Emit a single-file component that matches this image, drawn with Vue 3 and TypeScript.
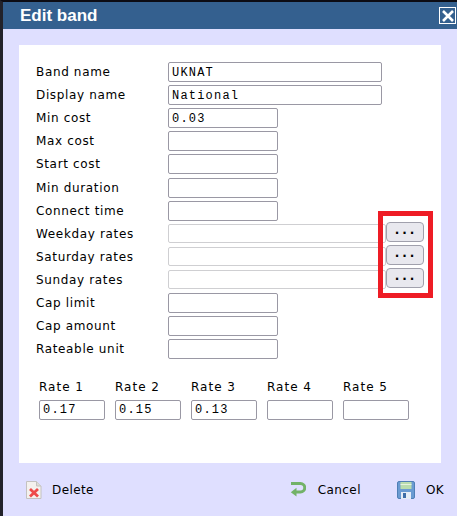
<script setup lang="ts">
interface Row { label: string; value: string; size: 'long' | 'short' | 'rate' }
const rows: Row[] = [
  { label: 'Band name', value: 'UKNAT', size: 'long' },
  { label: 'Display name', value: 'National', size: 'long' },
  { label: 'Min cost', value: '0.03', size: 'short' },
  { label: 'Max cost', value: '', size: 'short' },
  { label: 'Start cost', value: '', size: 'short' },
  { label: 'Min duration', value: '', size: 'short' },
  { label: 'Connect time', value: '', size: 'short' },
  { label: 'Weekday rates', value: '', size: 'rate' },
  { label: 'Saturday rates', value: '', size: 'rate' },
  { label: 'Sunday rates', value: '', size: 'rate' },
  { label: 'Cap limit', value: '', size: 'short' },
  { label: 'Cap amount', value: '', size: 'short' },
  { label: 'Rateable unit', value: '', size: 'short' },
]
const rates = [
  { label: 'Rate 1', value: '0.17' },
  { label: 'Rate 2', value: '0.15' },
  { label: 'Rate 3', value: '0.13' },
  { label: 'Rate 4', value: '' },
  { label: 'Rate 5', value: '' },
]
</script>

<template>
  <div class="dialog">
    <header class="titlebar">
      <span class="title">Edit band</span>
      <span class="close">
        <svg width="14" height="14" viewBox="0 0 14 14"><path d="M2 2 L12 12 M12 2 L2 12" stroke="#fff" stroke-width="2.6" fill="none" /></svg>
      </span>
    </header>
    <main class="card">
      <div class="form">
        <div v-for="r in rows" :key="r.label" class="row">
          <span class="label">{{ r.label }}</span>
          <input class="field" :class="r.size" :value="r.value" :disabled="r.size === 'rate'" readonly />
          <button v-if="r.size === 'rate'" class="dots" type="button">...</button>
        </div>
        <div class="highlight"></div>
      </div>
      <div class="rates">
        <div v-for="r in rates" :key="r.label" class="rate">
          <span class="rate-label">{{ r.label }}</span>
          <input class="field rate-input" :value="r.value" readonly />
        </div>
      </div>
    </main>
    <footer class="footer">
      <span class="action delete">
        <svg width="17" height="18" viewBox="0 0 17 18">
          <path d="M1.5 .5 H11.5 L16 5 V17.5 H1.5 Z" fill="#f4f1ee" stroke="#c4c2c0" />
          <path d="M11.5 .5 V5 H16" fill="#dddbd8" stroke="#c4c2c0" />
          <path d="M5 8 L13 15.5 M13 8 L5 15.5" stroke="#ee4a4a" stroke-width="2.8" fill="none" />
        </svg>
        Delete
      </span>
      <span class="action cancel">
        <svg width="16" height="16" viewBox="0 0 16 16">
          <path d="M1 1.5 H10.5 A4.2 4.2 0 0 1 10.5 10 H4" fill="none" stroke="#72b268" stroke-width="3" />
          <path d="M6.5 5.8 V14.5 L.8 10.2 Z" fill="#72b268" />
        </svg>
        Cancel
      </span>
      <span class="action ok">
        <svg width="18" height="18" viewBox="0 0 18 18">
          <rect x=".5" y=".5" width="17" height="17" rx="1.5" fill="#6a9bd2" stroke="#4f7fb6" />
          <rect x="3.5" y="1" width="11" height="7" fill="#b9dcae" />
          <rect x="3.5" y="3" width="11" height="1" fill="#e6f2df" />
          <rect x="4" y="11" width="10" height="7" fill="#e6edf6" />
          <rect x="6" y="12" width="3" height="5" fill="#3f6fa8" />
        </svg>
        OK
      </span>
    </footer>
  </div>
</template>

<style>
html, body { margin: 0; background: #fff; }
</style>

<style scoped>
.dialog {
  width: 457px;
  height: 516px;
  box-sizing: border-box;
  border-top: 2px solid #0c0c14;
  border-left: 3px solid #22222a;
  background: #dfdfff;
  font-family: "DejaVu Sans", Verdana, sans-serif;
  font-size: 12px;
  color: #000;
  display: flex;
  flex-direction: column;
  overflow: hidden;
}
.titlebar {
  height: 27px;
  flex: none;
  background: #34608f;
  display: flex;
  align-items: center;
  justify-content: space-between;
  padding: 0 1px 0 17px;
}
.title {
  font-family: "Liberation Sans", Arial, sans-serif;
  font-size: 17px;
  font-weight: 700;
  color: #fff;
}
.close {
  width: 15px;
  height: 15px;
  border: 1px solid #fff;
  display: flex;
  align-items: center;
  justify-content: center;
}
.card {
  flex: none;
  box-sizing: border-box;
  width: 422px;
  height: 418px;
  margin: 16px 0 0 16px;
  background: #fff;
  padding: 15.5px 0 0 17px;
}
.form { position: relative; }
.row {
  height: 23.1px;
  display: flex;
  align-items: center;
}
.label {
  width: 132px;
  flex: none;
  letter-spacing: 0.65px;
}
.field {
  box-sizing: border-box;
  height: 20px;
  margin: 0;
  padding: 1px 3px 0;
  border: 1px solid #9a98a4;
  border-radius: 2px;
  background: #fff;
  font-family: "Liberation Mono", "Courier New", monospace;
  font-size: 12px;
  letter-spacing: 1.2px;
  color: #000;
  outline: none;
}
.long { width: 214px; }
.short { width: 110px; }
.field.rate {
  width: 218px;
  height: 19px;
  border-color: #cfcfd2;
  background: #fff;
}
.dots {
  box-sizing: border-box;
  width: 38px;
  height: 20px;
  margin: 0 0 3px;
  padding: 0 0 4px 2px;
  border: 1px solid #a0a0ac;
  border-radius: 4px;
  background: #e8e8ee;
  font-family: "DejaVu Sans", sans-serif;
  font-size: 12px;
  font-weight: 700;
  letter-spacing: 3px;
  color: #000;
  line-height: 1;
}
.highlight {
  position: absolute;
  left: 342px;
  top: 150.5px;
  width: 55px;
  height: 87px;
  box-sizing: border-box;
  border: 5px solid #ee1c25;
  pointer-events: none;
}
.rates {
  display: flex;
  gap: 10px;
  margin: 19px 0 0 3px;
}
.rate {
  display: flex;
  width: 66px;
  flex-direction: column;
  gap: 5px;
}
.rate-label { line-height: 15px; letter-spacing: 1px; }
.rate-input { width: 66px; }
.footer {
  position: relative;
  flex: 1;
  display: flex;
  align-items: center;
  padding: 0 0 0 22px;
}
.action {
  display: flex;
  align-items: center;
  gap: 12px;
  letter-spacing: 0.4px;
}
.delete { gap: 10px; }
.cancel { margin-left: 196px; }
.ok { margin-left: 36px; gap: 11px; }
</style>
